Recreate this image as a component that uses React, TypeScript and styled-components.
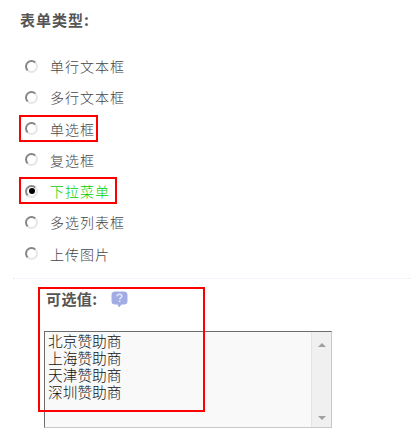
import React from 'react'
import styled, { createGlobalStyle } from 'styled-components'

const GlobalStyle = createGlobalStyle`
    html, body {
        margin: 0;
        padding: 0;
        background: #fff;
    }
    body {
        font-family: "Noto Sans CJK SC", "Liberation Sans", sans-serif;
        color: #555;
    }
`

const Page = styled.div`
    width: 411px;
    height: 440px;
    overflow: hidden;
    box-sizing: border-box;
    padding-top: 9px;
`

const Heading = styled.h3`
    margin: 0;
    padding-left: 20px;
    font-size: 15px;
    line-height: 22px;
    font-weight: 700;
    letter-spacing: 1px;
    color: #555;
`

const OptionList = styled.div`
    display: flex;
    flex-direction: column;
    align-items: flex-start;
    padding: 24px 0 0 25px;
    gap: 9.3px;
`

const Option = styled.label<{ $marked?: boolean; $markWidth?: number }>`
    position: relative;
    display: flex;
    align-items: center;
    height: 22px;
    gap: 12px;

    ${({ $marked, $markWidth }) => $marked && `
        &::after {
            content: '';
            position: absolute;
            left: -6px;
            top: -3px;
            width: ${$markWidth}px;
            height: 27px;
            box-sizing: border-box;
            border: 2px solid #f00;
        }
    `}
`

const Radio = styled.span<{ $checked?: boolean }>`
    width: 13px;
    height: 13px;
    box-sizing: border-box;
    border-radius: 50%;
    border: 2px solid;
    border-color: #858585 #e6e6e6 #e6e6e6 #858585;
    background: #fff;
    display: flex;
    align-items: center;
    justify-content: center;

    &::before {
        content: '';
        display: ${({ $checked }) => ($checked ? 'block' : 'none')};
        width: 6px;
        height: 6px;
        border-radius: 50%;
        background: #000;
    }
`

const OptionText = styled.span<{ $active?: boolean }>`
    font-size: 14px;
    line-height: 22px;
    font-weight: 300;
    letter-spacing: 1px;
    color: ${({ $active }) => ($active ? '#00d000' : '#444')};
`

const Divider = styled.div`
    margin: 13px 0 0 13px;
    border-top: 1px dotted #e6ebf2;
`

const ValuesBlock = styled.div`
    position: relative;
    margin: 8px 0 0 44px;
    width: 288px;

    &::after {
        content: '';
        position: absolute;
        left: -6px;
        top: 0;
        width: 167px;
        height: 125px;
        box-sizing: border-box;
        border: 2px solid #f00;
        pointer-events: none;
    }
`

const ValuesLabel = styled.div`
    display: flex;
    align-items: center;
    height: 24px;
    padding: 0 0 3px 2px;
    gap: 14px;
    font-size: 15px;
    font-weight: 700;
    letter-spacing: 0.4px;
    color: #555;

    svg {
        margin-top: 2px;
    }
`

const ValuesBox = styled.div`
    display: flex;
    margin-top: 17px;
    height: 97px;
    box-sizing: border-box;
    background: #f9f9f9;
    border: 1px solid;
    border-color: #6e6e6e #c8c8c8 #c8c8c8 #6e6e6e;
`

const ValuesText = styled.div`
    flex: 1;
    padding: 0 3px;
    font-size: 14.7px;
    line-height: 17.2px;
    font-weight: 300;
    color: #111;
    white-space: pre-line;
`

const ScrollBar = styled.div`
    width: 20px;
    display: flex;
    flex-direction: column;
    justify-content: space-between;
    align-items: center;
    padding: 11px 0 7px;
    box-sizing: border-box;
    background: #f0f0f0;
    border-left: 1px solid #e4e4e4;
`

const Arrow = styled.span<{ $down?: boolean }>`
    width: 0;
    height: 0;
    border-left: 4px solid transparent;
    border-right: 4px solid transparent;
    ${({ $down }) => ($down ? 'border-top: 4px solid #a0a0a0;' : 'border-bottom: 4px solid #a0a0a0;')}
`

const HelpIcon = () => (
    <svg width="17" height="17" viewBox="0 0 17 17">
        <path d="M4 0.5h9a3.5 3.5 0 0 1 3.5 3.5v6a3.5 3.5 0 0 1-3.5 3.5h-2.5L8 16.5 6.5 13.5H4A3.5 3.5 0 0 1 0.5 10V4A3.5 3.5 0 0 1 4 0.5z" fill="#a3abe3" />
        <path d="M6.2 5.2c0-1.2 1-1.9 2.3-1.9s2.3 0.7 2.3 1.9c0 1.7-2.1 1.6-2.1 3.1" fill="none" stroke="#e4e7f8" strokeWidth="1.5" />
        <rect x="7.8" y="9.4" width="1.6" height="1.6" fill="#e4e7f8" />
    </svg>
)

const options = [
    { label: '单行文本框' },
    { label: '多行文本框' },
    { label: '单选框', markWidth: 79 },
    { label: '复选框' },
    { label: '下拉菜单', markWidth: 98, checked: true },
    { label: '多选列表框' },
    { label: '上传图片' },
]

const values = ['北京赞助商', '上海赞助商', '天津赞助商', '深圳赞助商']

const App = () => {
    return (
        <Page>
            <GlobalStyle />
            <Heading>表单类型:</Heading>
            <OptionList>
                {options.map((option, index) => (
                    <Option key={index} $marked={!!option.markWidth} $markWidth={option.markWidth}>
                        <Radio $checked={option.checked} />
                        <OptionText $active={option.checked}>{option.label}</OptionText>
                    </Option>
                ))}
            </OptionList>
            <Divider />
            <ValuesBlock>
                <ValuesLabel>
                    <span>可选值:</span>
                    <HelpIcon />
                </ValuesLabel>
                <ValuesBox>
                    <ValuesText>{values.join('\n')}</ValuesText>
                    <ScrollBar>
                        <Arrow />
                        <Arrow $down />
                    </ScrollBar>
                </ValuesBox>
            </ValuesBlock>
        </Page>
    )
}

export default App
